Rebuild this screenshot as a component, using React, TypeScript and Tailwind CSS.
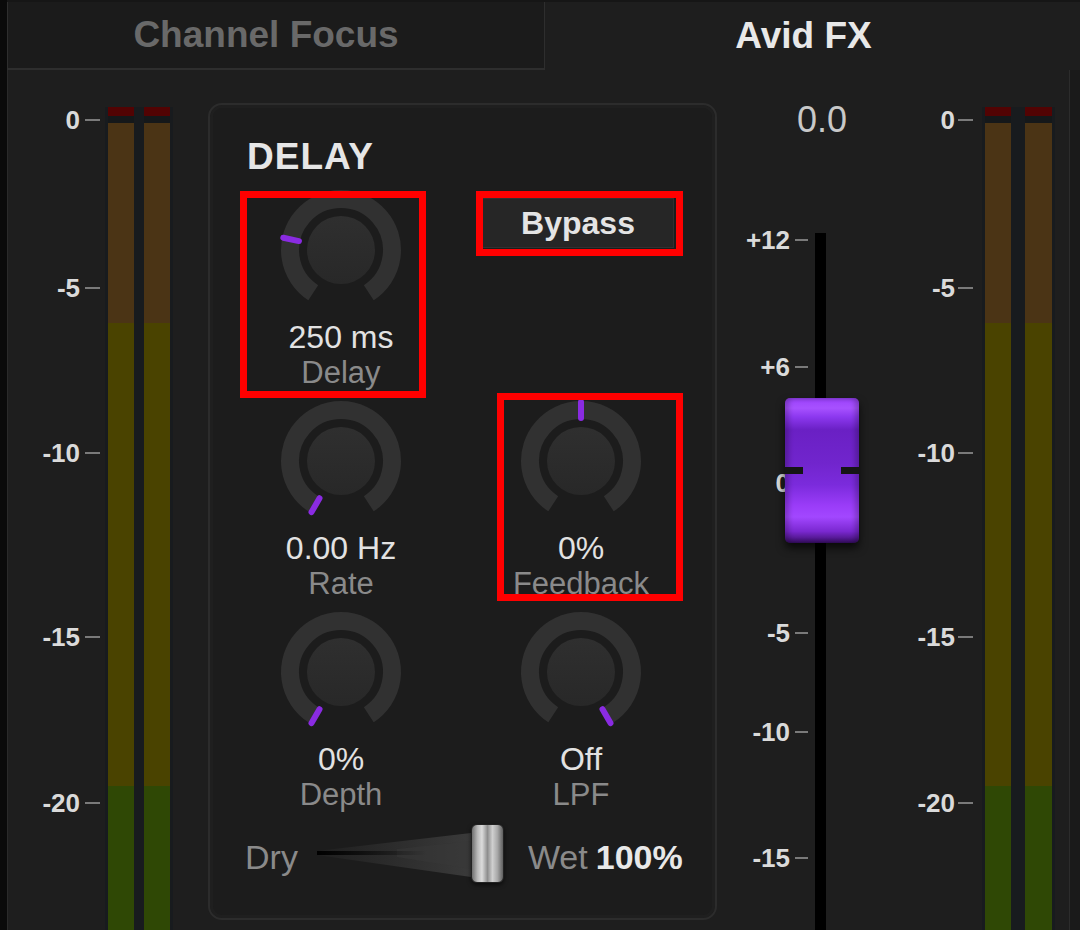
import React from "react";

const meterLabels = [
  { t: "0", y: 50 },
  { t: "-5", y: 218 },
  { t: "-10", y: 383 },
  { t: "-15", y: 567 },
  { t: "-20", y: 733 },
];

const faderLabels = [
  { t: "+12", y: 170 },
  { t: "+6", y: 297 },
  { t: "0", y: 413 },
  { t: "-5", y: 563 },
  { t: "-10", y: 662 },
  { t: "-15", y: 788 },
];

function MeterBar() {
  return (
    <div className="flex flex-col w-full h-full">
      <div className="h-[9px] bg-[#520303] shrink-0" />
      <div className="h-[7px] bg-[#15181a] shrink-0" />
      <div className="h-[200px] bg-[#4b3415] shrink-0" />
      <div className="h-[463px] bg-[#4a4300] shrink-0" />
      <div className="flex-1 bg-[#2f4805]" />
    </div>
  );
}

function Knob({ angle }: { angle: number }) {
  const cx = 65;
  const cy = 65;
  const r = 51;
  const rad = (a: number) => (a * Math.PI) / 180;
  const pt = (a: number, rr: number) => [cx + rr * Math.sin(rad(a)), cy - rr * Math.cos(rad(a))];
  const [sx, sy] = pt(-147, r);
  const [ex, ey] = pt(147, r);
  const [ix1, iy1] = pt(angle, 43);
  const [ix2, iy2] = pt(angle, 59);
  return (
    <svg width="130" height="130" viewBox="0 0 130 130">
      <defs>
        <linearGradient id="knobfill" x1="0" y1="0" x2="0" y2="1">
          <stop offset="0" stopColor="#2f2f2f" />
          <stop offset="1" stopColor="#282828" />
        </linearGradient>
      </defs>
      <path d={`M ${sx} ${sy} A ${r} ${r} 0 1 1 ${ex} ${ey}`} stroke="#313131" strokeWidth="18" fill="none" />
      <circle cx={cx} cy={cy} r={34} fill="url(#knobfill)" />
      <line x1={ix1} y1={iy1} x2={ix2} y2={iy2} stroke="#8a2be2" strokeWidth="6" strokeLinecap="round" />
    </svg>
  );
}

function KnobCell({ angle, value, label }: { angle: number; value: string; label: string }) {
  return (
    <div className="w-[200px] h-[205px] flex flex-col items-center">
      <Knob angle={angle} />
      <div className="mt-[5px] text-[32px] leading-[35px] text-[#e2e2e2] whitespace-nowrap">{value}</div>
      <div className="text-[31px] leading-[35px] text-[#8a8a8a] whitespace-nowrap">{label}</div>
    </div>
  );
}

function ScaleRow({ t, y, width, gap, tick }: { t: string; y: number; width: number; gap: number; tick: number }) {
  return (
    <div
      className="absolute left-0 h-[30px] flex items-center justify-end"
      style={{ top: y - 15, width, gap }}
    >
      <span className="text-[26px] font-bold text-[#dadada] leading-none">{t}</span>
      <span className="h-[2px] bg-[#7a7a7a]" style={{ width: tick }} />
    </div>
  );
}

export default function App() {
  return (
    <div className="w-[1080px] h-[930px] bg-[#1e1e1e] overflow-hidden relative flex font-['Liberation_Sans',Arial,sans-serif]">
      <div className="w-[7px] shrink-0 bg-[#0a0a0a]" />
      <div className="flex-1 flex flex-col">
        {/* Tabs */}
        <div className="h-[70px] flex shrink-0 border-t-2 border-[#161616]">
          <div className="w-[538px] h-full bg-[#1b1b1b] border-l border-r border-b-2 border-[#2e2e2e] flex items-center justify-center pr-[20px]">
            <span className="text-[37px] font-bold text-[#696969]">Channel Focus</span>
          </div>
          <div className="flex-1 h-full flex items-center justify-center pr-[18px]">
            <span className="text-[37px] font-bold text-[#e8e8e8]">Avid FX</span>
          </div>
        </div>

        {/* Main */}
        <div className="flex-1 flex border-l border-[#2a2a2a]">
          {/* Left meter */}
          <div className="relative w-[200px] shrink-0 h-full">
            {meterLabels.map((l) => (
              <ScaleRow key={l.t} t={l.t} y={l.y} width={92} gap={5} tick={15} />
            ))}
            <div className="absolute left-[97px] top-[37px] bottom-0 w-[68px] bg-[#181b1e] flex gap-[10px] px-[3px]">
              <div className="w-[26px] h-full"><MeterBar /></div>
              <div className="w-[26px] h-full"><MeterBar /></div>
            </div>
          </div>

          {/* Delay panel */}
          <div className="mt-[33px] w-[509px] h-[817px] shrink-0 rounded-[14px] border-2 border-[#2c2c2c] bg-[#1c1c1c] shadow-[inset_0_0_0_3px_#1f1f1f] flex flex-col">
            <div className="pt-[32px] pl-[37px] h-[72px] text-[37px] leading-[40px] font-bold tracking-[1px] text-[#e6e6e6]">DELAY</div>
            <div className="mt-[8px] pl-[31px] flex flex-col gap-[6px]">
              <div className="flex gap-[40px]">
                <KnobCell angle={-78} value="250 ms" label="Delay" />
                <div className="w-[200px] flex justify-center">
                  <div className="mt-[13px] w-[192px] h-[50px] bg-[#262626] border border-[#313131] flex items-center justify-center text-[32px] font-bold text-[#e4e4e4] mr-[6px]">
                    Bypass
                  </div>
                </div>
              </div>
              <div className="flex gap-[40px]">
                <KnobCell angle={-150} value="0.00 Hz" label="Rate" />
                <KnobCell angle={0} value="0%" label="Feedback" />
              </div>
              <div className="flex gap-[40px]">
                <KnobCell angle={-150} value="0%" label="Depth" />
                <KnobCell angle={150} value="Off" label="LPF" />
              </div>
            </div>
            <div className="mt-[11px] h-[60px] pl-[35px] flex items-center">
              <span className="text-[34px] text-[#8a8a8a] mt-[8px]">Dry</span>
              <svg width="154" height="60" viewBox="0 0 154 60" className="ml-[19px]">
                <defs>
                  <linearGradient id="wedge" x1="0" y1="0" x2="1" y2="0">
                    <stop offset="0" stopColor="#1f1f1f" />
                    <stop offset="0.5" stopColor="#2c2c2c" />
                    <stop offset="1" stopColor="#3a3a3a" />
                  </linearGradient>
                  <linearGradient id="wline" x1="0" y1="0" x2="1" y2="0">
                    <stop offset="0" stopColor="#000" stopOpacity="1" />
                    <stop offset="1" stopColor="#000" stopOpacity="0" />
                  </linearGradient>
                </defs>
                <polygon points="0,28 154,10 154,54 0,32" fill="url(#wedge)" />
                <polygon points="80,26 154,18 154,46 80,34" fill="#383838" opacity="0.5" />
                <rect x="0" y="28" width="110" height="4" fill="url(#wline)" />
              </svg>
              <div className="w-[33px] h-[59px] rounded-[6px] border border-[#222] bg-[linear-gradient(to_right,#6f6f6f_0%,#b8b8b8_18%,#dcdcdc_32%,#8e8e8e_50%,#cfcfcf_66%,#a8a8a8_82%,#5f5f5f_100%)] shadow-[0_2px_4px_rgba(0,0,0,0.6)]" />
              <span className="ml-[24px] text-[34px] text-[#8a8a8a] mt-[8px]">Wet</span>
              <span className="ml-[8px] text-[34px] font-bold text-[#e8e8e8] mt-[8px]">100%</span>
            </div>
          </div>

          {/* Fader */}
          <div className="relative w-[168px] shrink-0 h-full">
            <div className="absolute left-[55px] w-[100px] top-[30px] h-[40px] flex items-center justify-center text-[36px] text-[#c8c8c8]">
              0.0
            </div>
            {faderLabels.map((l) => (
              <ScaleRow key={l.t} t={l.t} y={l.y} width={91} gap={5} tick={13} />
            ))}
            <div className="absolute left-[98px] top-[163px] bottom-0 w-[11px] bg-black" />
            <div className="absolute left-[68px] top-[328px] w-[74px] h-[145px] rounded-[5px] bg-[linear-gradient(to_bottom,#9b42fb_0%,#a751ff_7%,#8c38ef_13%,#6a20c4_22%,#7125cd_45%,#7b2bdc_60%,#9a3cf8_74%,#a247ff_82%,#7a28d0_92%,#3a0e68_100%)] shadow-[0_5px_9px_rgba(0,0,0,0.7),inset_4px_0_5px_rgba(0,0,0,0.22),inset_-4px_0_5px_rgba(0,0,0,0.22)]">
              <div className="absolute left-0 top-[69px] w-[18px] h-[7px] bg-[#151515]" />
              <div className="absolute right-0 top-[69px] w-[18px] h-[7px] bg-[#151515]" />
            </div>
          </div>

          {/* Right meter */}
          <div className="relative w-[185px] shrink-0 h-full border-r border-[#2c2c2c]">
            {meterLabels.map((l) => (
              <ScaleRow key={l.t} t={l.t} y={l.y} width={88} gap={3} tick={15} />
            ))}
            <div className="absolute left-[97px] top-[37px] bottom-0 w-[73px] bg-[#181b1e] flex gap-[14px] px-[3px]">
              <div className="w-[26px] h-full"><MeterBar /></div>
              <div className="w-[27px] h-full"><MeterBar /></div>
            </div>
          </div>
          <div className="flex-1 bg-[#1a1a1a]" />
        </div>
      </div>

      {/* Annotation boxes */}
      <div className="absolute left-[240px] top-[191px] w-[186px] h-[207px] border-[7px] border-[#ff0000]" />
      <div className="absolute left-[476px] top-[191px] w-[207px] h-[65px] border-[7px] border-[#ff0000]" />
      <div className="absolute left-[497px] top-[393px] w-[186px] h-[208px] border-[7px] border-[#ff0000]" />
    </div>
  );
}
